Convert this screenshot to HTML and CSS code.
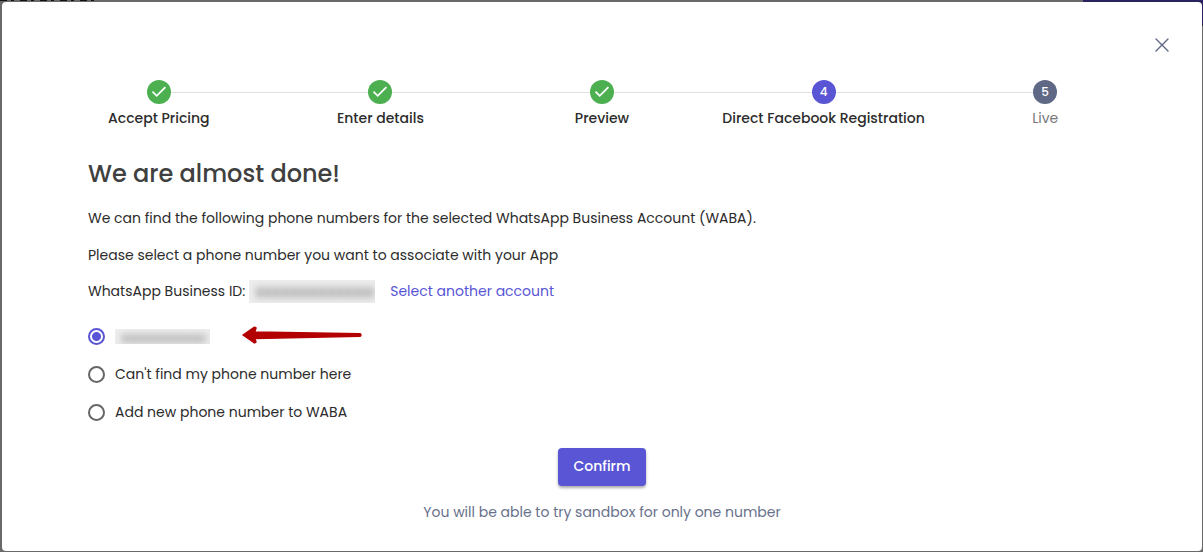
FILE: index.html
```html
<!DOCTYPE html>
<html lang="en">
<head>
<meta charset="utf-8">
<meta name="viewport" content="width=device-width, initial-scale=1">
<title>Direct Facebook Registration</title>
<link rel="stylesheet" href="styles.css">
</head>
<body>
<div class="page-edge" aria-hidden="true"><span class="page-title"></span><span class="page-action"></span></div>
<main class="dialog" role="dialog" aria-labelledby="title">
  <button class="close" type="button" aria-label="Close">
    <svg width="14" height="14" viewBox="0 0 14 14"><path d="M1 1l12 12M13 1L1 13" stroke="#5f6885" stroke-width="1.4" stroke-linecap="round"/></svg>
  </button>
  <ol class="stepper">
    <li class="step"><span class="dot done"><svg width="24" height="24" viewBox="0 0 24 24"><path d="M5.500 11.700l4.200 4.100 8.700-8.700" fill="none" stroke="#fff" stroke-width="1.800"/></svg></span><span class="step-label">Accept Pricing</span></li>
    <li class="step"><span class="dot done"><svg width="24" height="24" viewBox="0 0 24 24"><path d="M5.500 11.700l4.200 4.100 8.700-8.700" fill="none" stroke="#fff" stroke-width="1.800"/></svg></span><span class="step-label">Enter details</span></li>
    <li class="step"><span class="dot done"><svg width="24" height="24" viewBox="0 0 24 24"><path d="M5.500 11.700l4.200 4.100 8.700-8.700" fill="none" stroke="#fff" stroke-width="1.800"/></svg></span><span class="step-label">Preview</span></li>
    <li class="step"><span class="dot current">4</span><span class="step-label">Direct Facebook Registration</span></li>
    <li class="step"><span class="dot upcoming">5</span><span class="step-label muted">Live</span></li>
  </ol>
  <form class="content">
    <h1 id="title">We are almost done!</h1>
    <p>We can find the following phone numbers for the selected WhatsApp Business Account (WABA).</p>
    <p>Please select a phone number you want to associate with your App</p>
    <div class="account">
      <span>WhatsApp Business ID:</span>
      <span class="redacted redacted-id"></span>
      <a href="#">Select another account</a>
    </div>
    <div class="options">
      <div class="option">
        <input type="radio" name="phone" id="phone-own" aria-label="Hidden phone number" checked>
        <label for="phone-own" class="redacted redacted-phone"></label>
        <svg class="arrow" width="122" height="20" viewBox="0 0 122 20"><path d="M2 10L13.500 2.200 15 3 13.800 6.900 119 8.700Q121 10 119 11.300L13.800 13.600 15 17 13.500 18Z" fill="#b30000" stroke="#b30000" stroke-width="1.500" stroke-linejoin="round"/></svg>
      </div>
      <div class="option">
        <input type="radio" name="phone" id="phone-missing"><label for="phone-missing">Can't find my phone number here</label>
      </div>
      <div class="option">
        <input type="radio" name="phone" id="phone-new"><label for="phone-new">Add new phone number to WABA</label>
      </div>
    </div>
  </form>
  <footer class="actions">
    <button class="confirm" type="button">Confirm</button>
    <p class="note">You will be able to try sandbox for only one number</p>
  </footer>
</main>
</body>
</html>
```
FILE: styles.css
```css
* { box-sizing: border-box; }
body {
  margin: 0;
  padding: 2px 1px 1px 2px;
  min-height: 100vh;
  background: #696969;
  color: #2c2c2c;
  font: 14px/20px Poppins, Inter, sans-serif;
}
h1, p, ol { margin: 0; padding: 0; }
.page-edge {
  position: absolute;
  inset: 0 0 auto;
  height: 26px;
  display: flex;
  justify-content: space-between;
}
.page-title {
  width: 98px;
  height: 1px;
  background: repeating-linear-gradient(90deg, #111 0 7px, #696969 7px 11px, #111 11px 14px, #696969 14px 20px);
}
.page-action { width: 120px; background: #292360; }
.dialog {
  position: relative;
  min-height: calc(100vh - 3px);
  padding: 78px 46px 24px;
  border-radius: 4px;
  background: #fff;
}
.close {
  position: absolute;
  top: 31px;
  right: 28px;
  width: 24px;
  height: 24px;
  display: grid;
  place-items: center;
  padding: 0;
  border: 0;
  background: none;
}
.stepper { display: flex; list-style: none; }
.step {
  position: relative;
  flex: 1;
  display: flex;
  flex-direction: column;
  align-items: center;
  gap: 4px;
}
.step + .step::before {
  content: "";
  position: absolute;
  top: 12px;
  left: calc(-50% + 12px);
  right: calc(50% + 12px);
  border-top: 1px solid #e0e0e0;
}
.dot {
  width: 24px;
  height: 24px;
  display: grid;
  place-items: center;
  border-radius: 50%;
  color: #fff;
  font-size: 12px;
  font-weight: 500;
}
.done { background: #4caf50; }
.current { background: #5955d4; }
.upcoming { background: #5f6885; }
.step-label { font-weight: 500; }
.muted { color: #777; font-weight: 400; }
.content {
  display: flex;
  flex-direction: column;
  gap: 17px;
  padding: 30px 40px 0;
}
h1 {
  color: #404040;
  font-size: 24px;
  line-height: 32px;
  font-weight: 500;
}
.content h1 + p { margin-top: 1px; }
.account { display: flex; align-items: center; margin-top: -1px; }
.account a { margin-left: 15px; color: #5955d4; text-decoration: none; }
.redacted { position: relative; overflow: hidden; background: #ededed; }
.redacted::after {
  content: "";
  position: absolute;
  inset: 7px 0 5px 7px;
  background: repeating-linear-gradient(90deg, #bababa 0 6px, #d2d2d2 6px 9px);
  filter: blur(3px);
}
.redacted-id { width: 126px; height: 23px; margin: -1px 0 -2px 4px; }
.redacted-phone { width: 95px; height: 15px; }
.redacted-phone::after { inset: 5px 4px 1px 7px; }
.options { display: flex; flex-direction: column; margin-top: -1px; }
.option { height: 38px; display: flex; align-items: center; gap: 10px; }
.option input {
  appearance: none;
  width: 17px;
  height: 17px;
  margin: 0;
  border: 2px solid #666;
  border-radius: 50%;
}
.option input:checked {
  border-color: #5955d4;
  background: radial-gradient(circle, #5955d4 0 4px, transparent 5px);
}
.arrow { margin: 0 0 2px 21px; }
.actions { display: flex; flex-direction: column; align-items: center; gap: 16px; padding-top: 17px; }
.confirm {
  padding: 8px 15px 10px;
  border: 0;
  border-radius: 4px;
  background: #5955d4;
  color: #fff;
  font: inherit;
  font-weight: 500;
  box-shadow: 0 2px 3px #0005;
}
.note { color: #68718c; }
```
